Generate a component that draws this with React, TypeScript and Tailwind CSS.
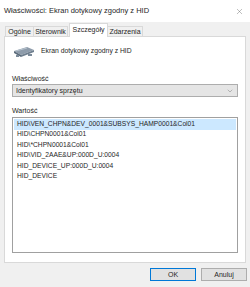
import { X, ChevronDown } from 'lucide-react';

const rows = [
  'HID\\VEN_CHPN&DEV_0001&SUBSYS_HAMP0001&Col01',
  'HID\\CHPN0001&Col01',
  'HID\\*CHPN0001&Col01',
  'HID\\VID_2AAE&UP:000D_U:0004',
  'HID_DEVICE_UP:000D_U:0004',
  'HID_DEVICE',
];

function Tab({ label, w, active }: { label: string; w: string; active?: boolean }) {
  if (active) {
    return (
      <div
        className={`relative z-10 -mb-px ml-px flex h-[14px] items-center justify-center border border-b-0 border-[#d9d9d9] bg-white pb-[2px] ${w}`}
      >
        {label}
      </div>
    );
  }
  return (
    <div
      className={`-ml-px flex h-[10px] items-center justify-center border border-b-0 border-[#d9d9d9] bg-[#f0f0f0] first:ml-0 ${w}`}
    >
      {label}
    </div>
  );
}

function DeviceIcon() {
  return (
    <svg width="22" height="14" viewBox="0 0 22 14">
      <polygon points="1,5 14,1 21,4 8,9" fill="#8e9cab" />
      <polygon points="1,5 8,9 8,11 1,7" fill="#5a6a7a" />
      <polygon points="8,9 21,4 21,6 8,11" fill="#6f7f8f" />
      <line x1="3" y1="5" x2="14" y2="2" stroke="#b8c4cf" strokeWidth="1" />
      <rect x="3" y="9" width="3" height="2" fill="#7b8a99" />
      <rect x="15" y="8" width="4" height="2" fill="#7b8a99" />
    </svg>
  );
}

export default function App() {
  return (
    <div
      className="flex h-[287px] w-[250px] flex-col bg-[#f0f0f0] text-[7px] leading-none text-[#262626]"
      style={{ fontFamily: '"Liberation Sans", Arial, sans-serif' }}
    >
      <div className="flex h-[22px] shrink-0 items-center justify-between bg-white pl-[4px] pr-[6px]">
        <span className="text-[7.5px]">Właściwości: Ekran dotykowy zgodny z HID</span>
        <X size={9} strokeWidth={1} className="text-[#555]" />
      </div>

      <div className="flex h-[14px] shrink-0 items-end pl-[5px]">
        <Tab label="Ogólne" w="w-[29px]" />
        <Tab label="Sterownik" w="w-[35px]" />
        <Tab label="Szczegóły" w="w-[39px]" active />
        <Tab label="Zdarzenia" w="w-[36px]" />
      </div>

      <div className="mx-[4px] flex h-[227px] shrink-0 flex-col border border-[#d9d9d9] bg-white px-[7px] pt-[9px]">
        <div className="flex h-[14px] items-center gap-[6px] pl-px">
          <DeviceIcon />
          <span className="-mt-[4px] text-[6.8px]">Ekran dotykowy zgodny z HID</span>
        </div>

        <div className="mt-[14px] flex h-[8px] items-center">Właściwość</div>
        <div className="mt-[2px] flex h-[13px] items-center justify-between border border-[#adadad] bg-[#e5e5e5] pl-[3px] pr-[3px]">
          <span>Identyfikatory sprzętu</span>
          <ChevronDown size={8} strokeWidth={1.2} className="text-[#666]" />
        </div>

        <div className="mt-[9px] flex h-[8px] items-center">Wartość</div>
        <div className="mt-[3px] flex h-[136px] flex-col border border-[#a0a0a0] bg-white p-px">
          {rows.map((r, i) => (
            <div
              key={r}
              className={
                i === 0
                  ? 'flex h-[10.5px] items-center bg-[#cce8ff] pl-[3px] text-[6.7px]'
                  : 'flex h-[10.5px] items-center pl-[3px] text-[6.7px]'
              }
            >
              {r}
            </div>
          ))}
        </div>
      </div>

      <div className="flex flex-1 items-start justify-end gap-[5px] pr-[3px] pt-[5px]">
        <button className="flex h-[13px] w-[46px] items-center justify-center border border-[#0078d7] bg-[#e1e1e1]">
          OK
        </button>
        <button className="flex h-[13px] w-[46px] items-center justify-center border border-[#adadad] bg-[#e1e1e1]">
          Anuluj
        </button>
      </div>
    </div>
  );
}
